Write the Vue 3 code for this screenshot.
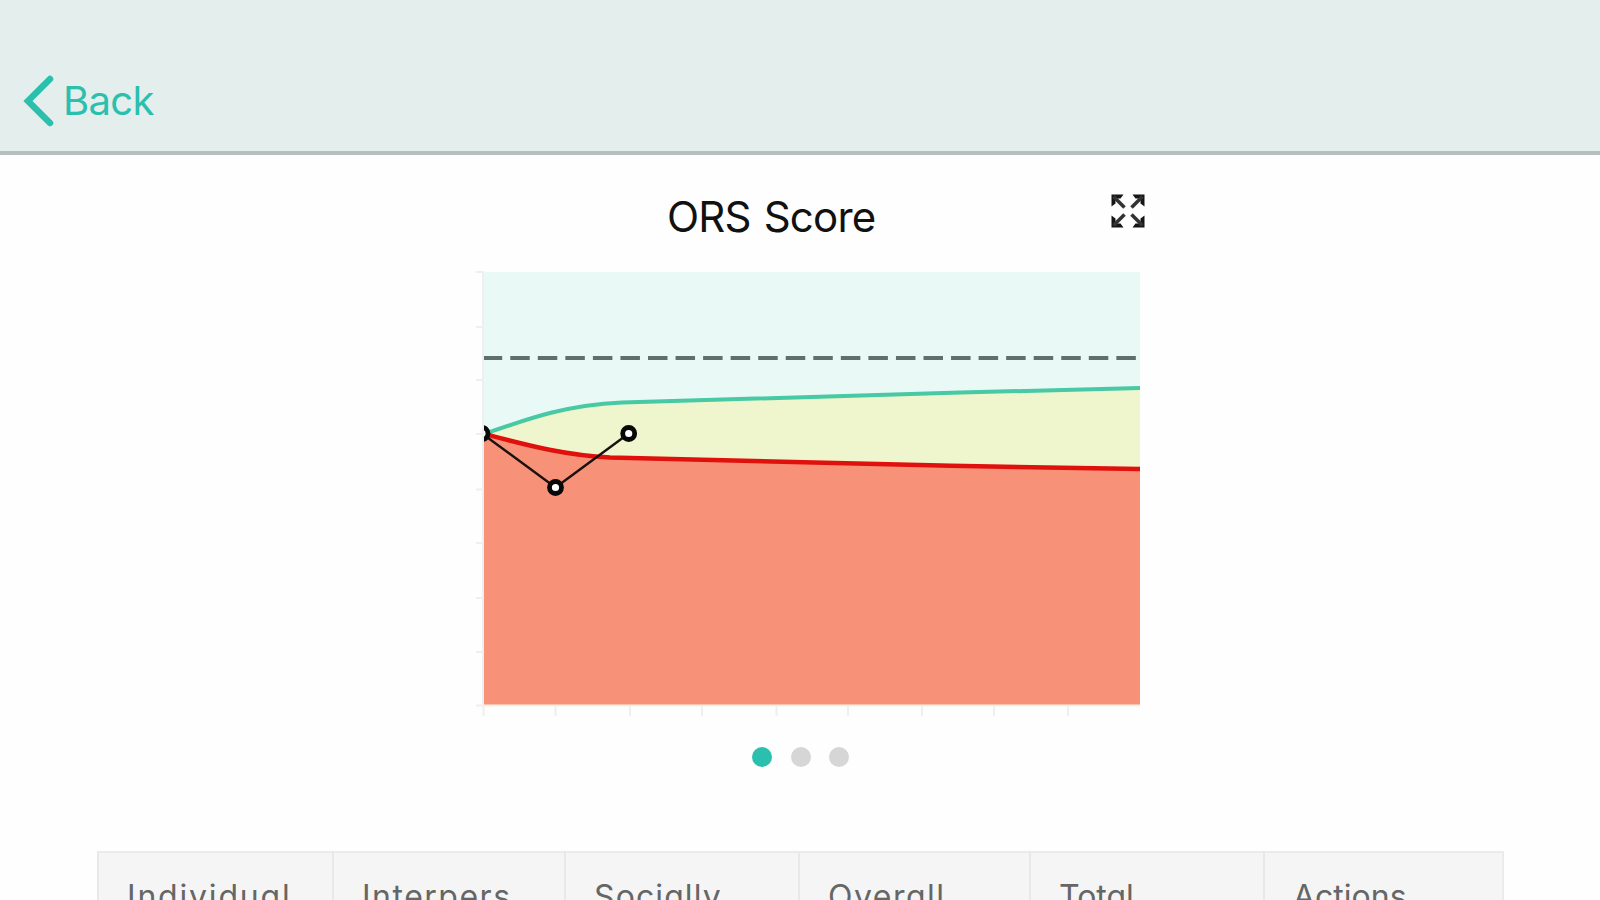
<template>
  <div class="page">
    <header class="topbar">
      <a class="back">
        <svg class="chevron" width="32" height="52" viewBox="0 0 32 52">
          <path d="M27 4 L5 26 L27 48" />
        </svg>
        <span class="back-label">Back</span>
      </a>
    </header>

    <section class="score">
      <div class="score-head">
        <h1>ORS Score</h1>
        <!-- Expand icon -->
        <svg class="expand" width="36" height="36" viewBox="0 0 36 36">
          <g v-for="angle in [0, 90, 180, 270]" :key="angle" :transform="`rotate(${angle} 18 18)`">
            <path class="head" d="M1.5 1.5 H13.5 L10.5 5.5 H5.5 V10.5 L1.5 13.5 Z" />
            <path class="shaft" d="M3.5 3.5 L14.5 14.5" />
          </g>
        </svg>
      </div>

      <svg class="chart" width="680" height="460" viewBox="470 262 680 460">
        <defs>
          <clipPath id="plot">
            <rect x="484" y="272" width="656" height="432.5" />
          </clipPath>
        </defs>

        <!-- Axis ticks -->
        <g class="ticks">
          <line v-for="y in yTicks" :key="'y' + y" x1="476" x2="484" :y1="y" :y2="y" />
          <line v-for="x in xTicks" :key="'x' + x" :x1="x" :x2="x" y1="705" y2="716" />
          <line x1="483" x2="483" y1="272" y2="705" />
          <line x1="483" x2="1140" y1="705.5" y2="705.5" />
        </g>

        <g clip-path="url(#plot)">
          <rect class="area-top" x="484" y="272" width="656" height="433" />
          <path class="area-mid" :d="upper + ' V705 H484 Z'" />
          <path class="area-low" :d="lower + ' V705 H484 Z'" />
          <line class="cutoff" x1="482.7" x2="1137" y1="358" y2="358" />
          <path class="line-upper" :d="upper" />
          <path class="line-lower" :d="lower" />
          <polyline class="line-score" :points="scoreLine" />
          <circle v-for="(p, i) in scores" :key="i" class="point" :cx="p.x" :cy="p.y" r="6" />
        </g>
      </svg>

      <div class="dots">
        <span v-for="n in 3" :key="n" class="dot" :class="{ active: n === current }"></span>
      </div>
    </section>

    <div class="table">
      <div v-for="col in columns" :key="col.label" class="cell" :style="{ letterSpacing: col.spacing + 'px' }">
        {{ col.label }}
      </div>
    </div>
  </div>
</template>

<script setup>
import { ref, computed } from 'vue'

const current = ref(1)

const columns = [
  { label: 'Individual', spacing: 1.8 },
  { label: 'Interpers', spacing: 1.5 },
  { label: 'Socially', spacing: 1.1 },
  { label: 'Overall', spacing: 1.5 },
  { label: 'Total', spacing: 0 },
  { label: 'Actions', spacing: 0 }
]

const yTicks = [272, 327, 380, 434, 489.5, 543, 598, 652, 705.5]
const xTicks = [483.5, 555.5, 630, 702, 776.5, 848, 922, 994, 1068]

// Expected range curves
const upper = 'M484 434 C530 418 566 405 622 402.5 C700 399 960 392.5 1140 388'
const lower = 'M484 434 C520 443 560 455 610 457.5 C700 461 960 466.5 1140 469'

const scores = [
  { x: 482, y: 433.5 },
  { x: 555.5, y: 487.5 },
  { x: 628.7, y: 433.5 }
]

const scoreLine = computed(() => scores.map(p => `${p.x},${p.y}`).join(' '))
</script>

<style>
body {
  background: #fff;
  overflow: hidden;
}
</style>

<style scoped>
.page {
  height: 900px;
  overflow: hidden;
  background: #fefefe;
  font-family: Inter, "Liberation Sans", sans-serif;
}

.topbar {
  box-sizing: border-box;
  height: 155px;
  padding: 75px 0 0 23px;
  background: #e4eeec;
  border-bottom: 4px solid #b4c0bd;
}

.back {
  display: flex;
  align-items: center;
  gap: 8px;
  color: #2bbfae;
}

.chevron path {
  fill: none;
  stroke: #2bbfae;
  stroke-width: 6.5;
  stroke-linecap: round;
}

.back-label {
  font-size: 40px;
  line-height: 52px;
  letter-spacing: -0.7px;
}

.score {
  display: flex;
  flex-direction: column;
  align-items: center;
}

.score-head {
  display: grid;
  grid-template-columns: 350px 1fr;
  justify-items: end;
  width: 680px;
  height: 107px;
  margin-left: 20px;
}

h1 {
  justify-self: start;
  margin: 36px 0 0 197px;
  font-size: 42px;
  font-weight: 400;
  line-height: 52px;
  letter-spacing: -0.8px;
  word-spacing: 2px;
  white-space: nowrap;
  color: #111;
}

.expand {
  margin: 38px 4px 0 0;
}

.expand .head {
  fill: #151515;
}

.expand .shaft {
  fill: none;
  stroke: #333;
  stroke-width: 3.6;
}

.chart {
  display: block;
  margin-left: 20px;
}

.ticks line {
  stroke: #efefef;
  stroke-width: 2;
}

.area-top {
  fill: #e9f9f6;
}

.area-mid {
  fill: #eff5cc;
}

.area-low {
  fill: #f79178;
}

.cutoff {
  stroke: #5f6f6c;
  stroke-width: 4;
  stroke-dasharray: 19.5 8.05;
}

.line-upper {
  fill: none;
  stroke: #46c9a4;
  stroke-width: 4;
}

.line-lower {
  fill: none;
  stroke: #e0100c;
  stroke-width: 4.5;
}

.line-score {
  fill: none;
  stroke: #1a1210;
  stroke-width: 2.4;
}

.point {
  fill: #fff;
  stroke: #080808;
  stroke-width: 4.8;
}

.dots {
  display: flex;
  gap: 18.4px;
  margin: 25px 0 0 1px;
}

.dot {
  width: 20px;
  height: 20px;
  border-radius: 50%;
  background: #d6d6d6;
}

.dot.active {
  background: #2bbfae;
}

.table {
  display: grid;
  grid-template-columns: 235px 232px 234px 231px 234px 241px;
  width: 1407px;
  margin: 84px 0 0 97px;
  background: #f5f5f5;
}

.cell {
  box-sizing: border-box;
  height: 90px;
  padding: 22px 0 0 28px;
  border-top: 2px solid #ebebeb;
  border-left: 2px solid #e8e8e8;
  font-size: 32px;
  line-height: 44px;
  font-feature-settings: "cv11";
  color: #666;
}

.cell:last-child {
  border-right: 2px solid #ebebeb;
}
</style>
